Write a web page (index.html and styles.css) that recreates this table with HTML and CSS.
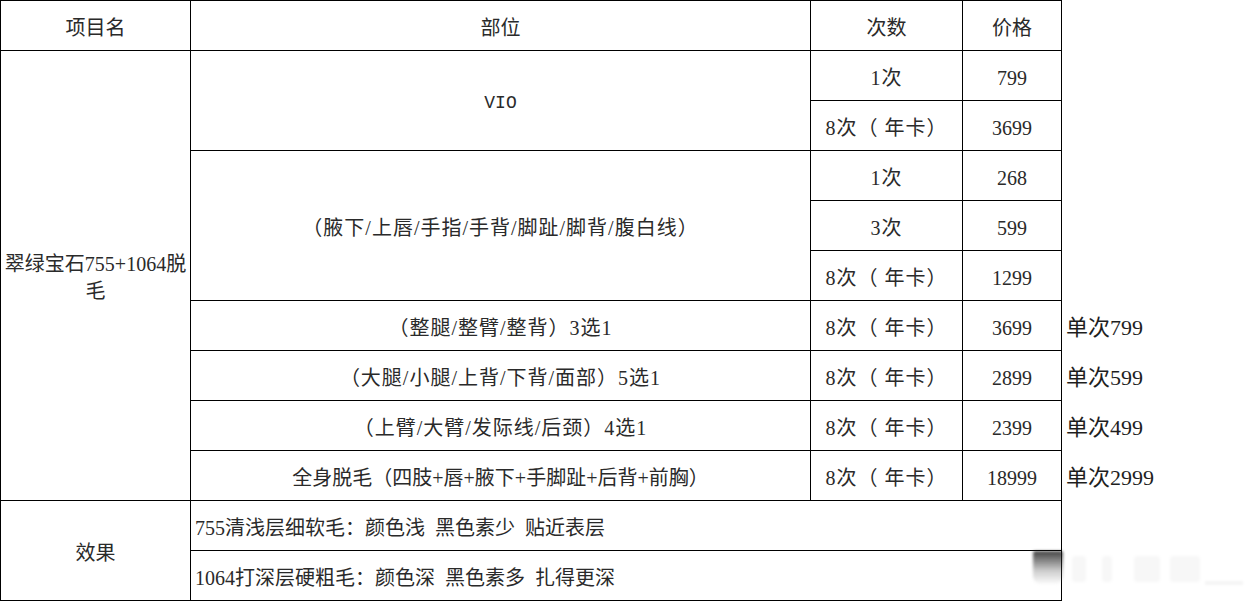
FILE: index.html
```html
<!DOCTYPE html>
<html lang="zh-CN">
<head>
<meta charset="utf-8">
<title>翠绿宝石脱毛价格表</title>
<link rel="stylesheet" href="styles.css">
</head>
<body>
<div class="page">
  <table class="price">
    <colgroup>
      <col class="c-name">
      <col class="c-part">
      <col class="c-count">
      <col class="c-price">
      <col class="c-note">
    </colgroup>
    <tbody>
      <tr>
        <td>项目名</td>
        <td>部位</td>
        <td>次数</td>
        <td>价格</td>
        <td class="note"></td>
      </tr>
      <tr>
        <td rowspan="9" class="name">翠绿宝石755+1064脱毛</td>
        <td rowspan="2" class="latin">VIO</td>
        <td class="cnt">1次</td>
        <td>799</td>
        <td class="note"></td>
      </tr>
      <tr>
        <td class="cnt">8次（ 年卡）</td>
        <td>3699</td>
        <td class="note"></td>
      </tr>
      <tr>
        <td rowspan="3" class="part">（腋下/上唇/手指/手背/脚趾/脚背/腹白线）</td>
        <td class="cnt">1次</td>
        <td>268</td>
        <td class="note"></td>
      </tr>
      <tr>
        <td class="cnt">3次</td>
        <td>599</td>
        <td class="note"></td>
      </tr>
      <tr>
        <td class="cnt">8次（ 年卡）</td>
        <td>1299</td>
        <td class="note"></td>
      </tr>
      <tr>
        <td class="part">（整腿/整臂/整背）3选1</td>
        <td class="cnt">8次（ 年卡）</td>
        <td>3699</td>
        <td class="note">单次799</td>
      </tr>
      <tr>
        <td class="part">（大腿/小腿/上背/下背/面部）5选1</td>
        <td class="cnt">8次（ 年卡）</td>
        <td>2899</td>
        <td class="note">单次599</td>
      </tr>
      <tr>
        <td class="part">（上臂/大臂/发际线/后颈）4选1</td>
        <td class="cnt">8次（ 年卡）</td>
        <td>2399</td>
        <td class="note">单次499</td>
      </tr>
      <tr>
        <td>全身脱毛（四肢+唇+腋下+手脚趾+后背+前胸）</td>
        <td class="cnt">8次（ 年卡）</td>
        <td>18999</td>
        <td class="note">单次2999</td>
      </tr>
      <tr>
        <td rowspan="2">效果</td>
        <td colspan="3" class="left">755清浅层细软毛：颜色浅 黑色素少 贴近表层</td>
        <td class="note"></td>
      </tr>
      <tr>
        <td colspan="3" class="left">1064打深层硬粗毛：颜色深 黑色素多 扎得更深</td>
        <td class="note"></td>
      </tr>
    </tbody>
  </table>
  <div class="watermark" aria-hidden="true">
    <span class="wm-block"></span>
    <span class="wm-bar wm-1"></span>
    <span class="wm-bar wm-2"></span>
    <span class="wm-bar wm-3"></span>
    <span class="wm-bar wm-4"></span>
    <span class="wm-line"></span>
  </div>
</div>
</body>
</html>
```

FILE: styles.css
```css
html, body {
  margin: 0;
  padding: 0;
  background: #ffffff;
}

.page {
  position: relative;
  width: 1260px;
  height: 601px;
  overflow: hidden;
}

.price {
  border-collapse: collapse;
  table-layout: fixed;
  width: 1260px;
  font-family: "Liberation Serif", "Noto Sans CJK SC", serif;
  font-size: 20px;
  color: #2a2a2a;
}

.c-name { width: 190px; }
.c-part { width: 620px; }
.c-count { width: 152px; }
.c-price { width: 99px; }
.c-note { width: 199px; }

.price tr {
  height: 50px;
}

.price td {
  border: 1px solid #000;
  padding: 4px 2px 0;
  text-align: center;
  vertical-align: middle;
  line-height: 26px;
  white-space: normal;
}

.price td.name {
  padding: 5px 0 0;
  line-height: 27px;
}

.price td.part,
.price td.cnt {
  letter-spacing: 1px;
}

.price td.left {
  text-align: left;
  padding-left: 4px;
  word-spacing: 5px;
}

.price td.latin {
  font-family: "Liberation Mono", monospace;
  font-size: 18px;
}

.price td.note {
  border: none;
  text-align: left;
  padding-left: 4px;
  font-size: 22px;
  color: #1e1e1e;
}

.watermark {
  position: absolute;
  left: 1030px;
  top: 548px;
  width: 230px;
  height: 45px;
  pointer-events: none;
}

.wm-block {
  position: absolute;
  left: 3px;
  top: 3px;
  width: 30px;
  height: 33px;
  border-radius: 2px 2px 8px 8px;
  background: linear-gradient(to bottom, rgba(20, 20, 20, 0.8), rgba(90, 90, 90, 0.3) 60%, rgba(200, 200, 200, 0.08));
  filter: blur(1.5px);
}

.wm-bar {
  position: absolute;
  top: 8px;
  height: 26px;
  background: rgba(0, 0, 0, 0.03);
  border-radius: 3px;
  filter: blur(1.5px);
}

.wm-1 { left: 42px; width: 14px; }
.wm-2 { left: 72px; width: 10px; }
.wm-3 { left: 104px; width: 26px; }
.wm-4 { left: 140px; width: 30px; }

.wm-line {
  position: absolute;
  left: 175px;
  top: 33px;
  width: 38px;
  height: 4px;
  background: rgba(0, 0, 0, 0.04);
  filter: blur(1px);
}
```
